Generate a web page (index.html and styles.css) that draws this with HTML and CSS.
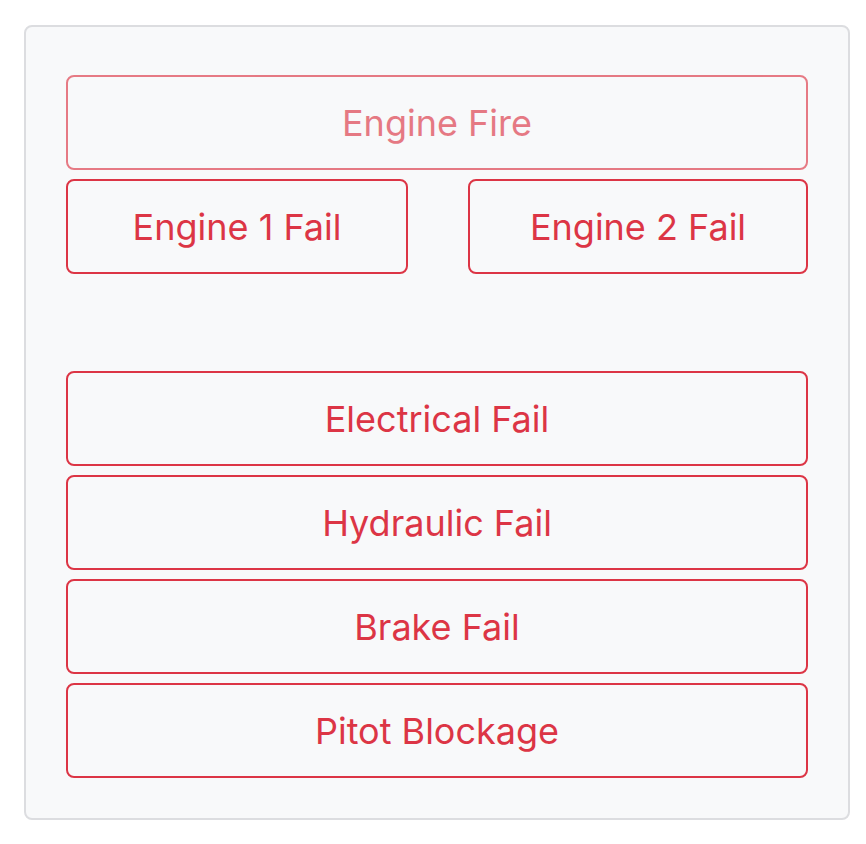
FILE: index.html
```html
<!DOCTYPE html>
<html>
<head>
<meta charset="utf-8">
<link rel="stylesheet" href="styles.css">
</head>
<body>
<div class="card">
  <button class="btn" disabled>Engine Fire</button>
  <div class="pair">
    <button class="btn">Engine 1 Fail</button>
    <button class="btn">Engine 2 Fail</button>
  </div>
  <div class="group">
    <button class="btn">Electrical Fail</button>
    <button class="btn">Hydraulic Fail</button>
    <button class="btn">Brake Fail</button>
    <button class="btn">Pitot Blockage</button>
  </div>
</div>
</body>
</html>
```
FILE: styles.css
```css
html, body {
  margin: 0;
  padding: 0;
  background: #ffffff;
}
body {
  padding: 25px 16px 0 24px;
  font-family: Inter, "Noto Sans", sans-serif;
}
.card {
  width: 826px;
  height: 795px;
  box-sizing: border-box;
  border: 2px solid #dcdde0;
  border-radius: 8px;
  background: #f8f9fa;
  padding: 48px 40px 40px 40px;
  display: flex;
  flex-direction: column;
  gap: 9px;
}
.pair {
  display: grid;
  grid-template-columns: 342px 340px;
  column-gap: 60px;
  margin-bottom: 88px;
}
.group {
  display: flex;
  flex-direction: column;
  gap: 9px;
}
.btn {
  height: 95px;
  width: 100%;
  box-sizing: border-box;
  border: 2px solid #dc3545;
  border-radius: 8px;
  background: transparent;
  color: #dc3545;
  font-family: Inter, "Noto Sans", sans-serif;
  font-size: 36px;
  font-weight: 400;
  padding: 0 12px;
  cursor: pointer;
}
.btn:disabled {
  opacity: 0.65;
  cursor: default;
}
```
